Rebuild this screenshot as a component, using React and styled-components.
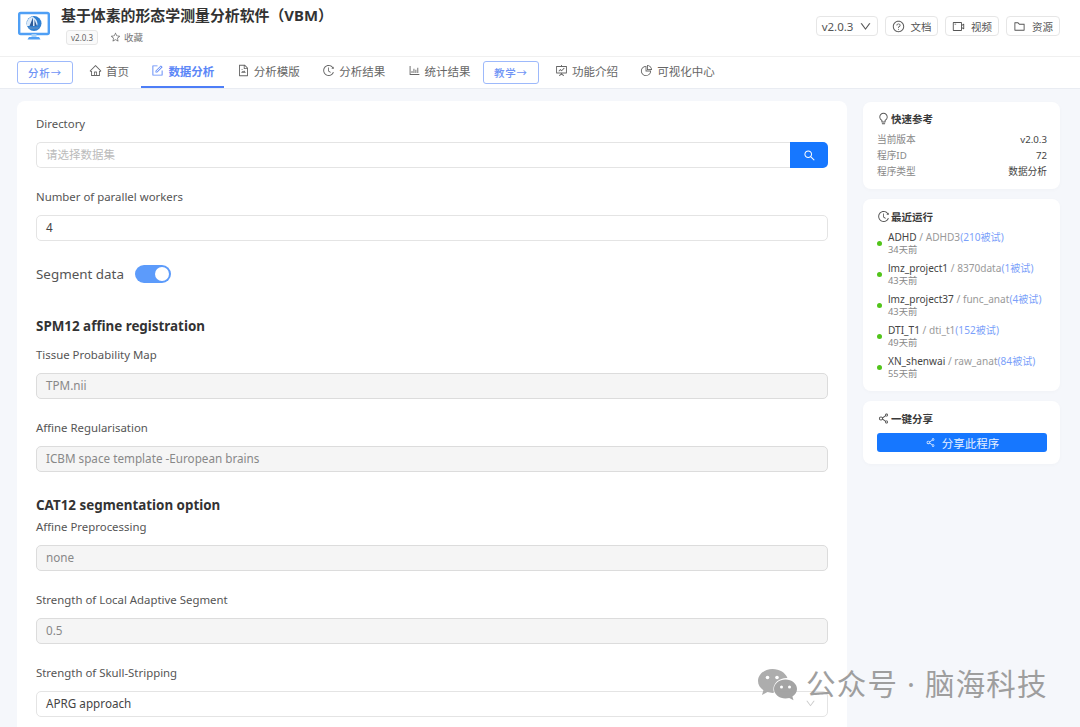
import React from "react";
import styled, { createGlobalStyle } from "styled-components";
import {
  AiOutlineHome, AiOutlineForm, AiOutlineFileImage, AiOutlineHistory, AiOutlineBarChart,
  AiOutlineFundProjectionScreen, AiOutlinePieChart, AiOutlineQuestionCircle, AiOutlineVideoCamera,
  AiOutlineFolder, AiOutlineBulb, AiOutlineShareAlt, AiOutlineSearch, AiOutlineStar, AiOutlineDown,
} from "react-icons/ai";

const Global = createGlobalStyle`
  html, body { margin: 0; padding: 0; height: 727px; overflow: hidden; background: #f5f7fb; }
  * { box-sizing: border-box; }
  body, input, button { font-family: "Noto Sans", "Noto Sans CJK SC", sans-serif; }
`;

const Page = styled.div`position: relative; width: 1080px; height: 727px; overflow: hidden; background: #f5f7fb;`;
const Header = styled.header`display: flex; justify-content: space-between; align-items: center; height: 57px; padding: 0 20px 0 18px; background: #fff; border-bottom: 1px solid #f0f0f0;`;
const Brand = styled.div`display: flex; gap: 11px; align-items: flex-start; height: 44px;`;
const LogoWrap = styled.div`flex: none; width: 32px; height: 32px; margin-top: 3px;`;
const BrandText = styled.div`display: flex; flex-direction: column; gap: 5px;`;
const Title = styled.h1`margin: 0; margin-top: -1px; font-size: 14.9px; line-height: 20px; font-weight: 700; color: #333;`;
const Meta = styled.div`display: flex; align-items: center; gap: 13px; padding-left: 5px;`;
const VersionTag = styled.span`height: 15px; padding: 0 4px; font-size: 8px; line-height: 13px; color: #666; background: #fafafa; border: 1px solid #e6e6e6; border-radius: 3px;`;
const Fav = styled.span`display: flex; align-items: center; gap: 3px; margin-left: -1px; margin-top: -1px; font-size: 9.5px; color: #777; svg { font-size: 11px; }`;
const Actions = styled.div`display: flex; gap: 7px; align-items: center; margin-bottom: 4px;`;
const ActionBtn = styled.div`display: flex; align-items: center; justify-content: center; gap: ${p => p.$gap || 6}px; width: ${p => p.$w}px; height: 20px; border: 1px solid #e6e6e6; border-radius: 4px; font-size: ${p => p.$fs || 10.5}px; color: #555; background: #fff; svg { font-size: ${p => p.$icon || 13}px; }`;

const Nav = styled.nav`display: flex; align-items: stretch; gap: 2.4px; height: 32px; padding-left: 17px; background: #fff; border-bottom: 1px solid #e9ecf2;`;
const GuideBtn = styled.div`align-self: flex-start; display: flex; align-items: center; justify-content: center; margin-top: 4px; margin-right: 3.6px; width: 56px; height: 23px; padding-bottom: 1px; border: 1px solid #9db9fb; border-radius: 3px; font-size: 10.5px; font-weight: 500; letter-spacing: .8px; color: #6f94f5; background: #fff;`;
const Tab = styled.div`display: flex; align-items: center; gap: 4px; padding: 0 10px 2px; height: 31px; font-size: 11.5px; font-weight: ${p => p.$active ? 600 : 400}; color: ${p => p.$active ? "#5b86f7" : "#666"}; border-bottom: 2px solid ${p => p.$active ? "#4d7ef7" : "transparent"}; svg { font-size: 13px; flex: none; }`;

const Main = styled.main`display: flex; align-items: flex-start; gap: 16px; padding: 12px 20px 0 17px;`;
const FormCard = styled.section`flex: none; width: 830px; height: 640px; padding: 15px 19px; background: #fff; border-radius: 8px;`;
const Field = styled.div`margin-bottom: 21px;`;
const Label = styled.div`height: 18px; margin-bottom: 8px; font-size: 11.4px; line-height: 16px; color: #555;`;
const InputBox = styled.div`display: flex; align-items: center; height: 26px; padding: 0 9px 2px; border: 1px solid ${p => p.$disabled ? "#dcdcdc" : "#e4e4e4"}; border-radius: 5px; background: ${p => p.$disabled ? "#f5f5f5" : "#fff"}; font-size: 11.7px; color: ${p => p.$disabled ? "#888" : "#444"};`;
const SearchRow = styled.div`display: flex;`;
const SearchInput = styled(InputBox)`flex: 1; border-right: 0; border-radius: 5px 0 0 5px; color: #bbb; font-size: 11.5px;`;
const SearchBtn = styled.div`display: flex; align-items: center; justify-content: center; width: 38px; height: 26px; background: #1677ff; border-radius: 0 5px 5px 0; color: #fff; font-size: 13px;`;
const SwitchRow = styled.div`display: flex; align-items: center; gap: 11px; height: 18px; margin-top: 24px; font-size: 13.4px; color: #555;`;
const Switch = styled.span`display: flex; justify-content: flex-end; align-items: center; width: 36px; height: 18px; padding: 2px; border-radius: 9px; background: #5c9bfb;`;
const Knob = styled.span`width: 14px; height: 14px; border-radius: 50%; background: #fff;`;
const Heading = styled.h2`margin: ${p => p.$top}px 0 ${p => p.$bottom}px; font-size: 13.4px; line-height: 19px; font-weight: 700; color: #333;`;
const SelectChevron = styled(AiOutlineDown)`margin-left: auto; margin-right: 2px; font-size: 11px; color: #ccc;`;

const Side = styled.aside`display: flex; flex-direction: column; gap: 10px; flex: none; width: 197px; margin-top: 1px;`;
const SideCard = styled.section`padding: ${p => p.$pt}px 13px ${p => p.$pb}px 14px; background: #fff; border-radius: 8px; box-shadow: 0 1px 4px rgba(0, 0, 0, .025);`;
const SideTitle = styled.div`display: flex; align-items: center; gap: 1px; height: 14px; font-size: 10.5px; font-weight: 700; color: #3a3a3a; svg { font-size: 13px; color: #555; }`;
const InfoList = styled.div`margin-top: 7px;`;
const InfoRow = styled.div`display: flex; justify-content: space-between; height: 16px; font-size: 9.7px; line-height: 16px; color: #888;`;
const InfoVal = styled.span`color: #444;`;
const RunList = styled.div`display: flex; flex-direction: column; gap: 6px; margin-top: 8px;`;
const Run = styled.div`display: flex; align-items: center; gap: 6px;`;
const Dot = styled.span`flex: none; width: 5px; height: 5px; border-radius: 50%; background: #52c41a;`;
const RunText = styled.div`display: flex; flex-direction: column; font-size: 10.1px; line-height: 12px; white-space: nowrap;`;
const RunName = styled.span`color: #444;`;
const Muted = styled.span`color: #999;`;
const Sub = styled.span`color: #7b9ffa;`;
const RunDate = styled.span`margin-top: 1px; color: #888; font-size: 9.3px;`;
const ShareBtn = styled.div`display: flex; align-items: center; justify-content: center; gap: 6px; margin-top: 8px; height: 19px; background: #1677ff; border-radius: 3px; color: #e6f0ff; font-size: 11.5px; svg { font-size: 11px; }`;

const Watermark = styled.div`position: absolute; left: 757px; top: 665px; display: flex; align-items: center; gap: 8px; color: #9a9a9a; font-size: 29.5px; line-height: 38px; letter-spacing: 1.2px; white-space: nowrap; opacity: .95;`;

const Logo = () => (
  <svg width="32" height="32" viewBox="0 0 32 32" aria-hidden="true">
    <rect x="1.200" y="4" width="29.600" height="21" rx="1.500" fill="#fff" stroke="#4f9ff5" strokeWidth="2.400" />
    <rect x="13.500" y="25" width="5" height="3" fill="#a8d2f8" />
    <path d="M11 28h10l1.500 2.500H9.500z" fill="#4f9ff5" />
    <circle cx="16" cy="14.500" r="7.500" fill="#2f7fd0" />
    <path d="M14.500 7.500a7.500 7.500 0 0 0-5.500 9.500h10q2-5-4.500-9.500z" fill="#dcebfa" />
    <path d="M15 8.500 11.500 17H15zM16.500 10.500 19 17h-2.500z" fill="#2c5c9a" />
    <path d="M10 18.200h11l-1.500 1.500h-8z" fill="#5a8cc4" />
  </svg>
);

const Wechat = () => (
  <svg width="41" height="33" viewBox="0 0 41 33" aria-hidden="true">
    <path d="M15.500 1C7.500 1 1 6.300 1 13c0 3.800 2.100 7 5.400 9.200L5 27l5.500-2.900c1.600.5 3.300.8 5 .8.6 0 1 0 1.500-.1a11 11 0 0 1-.6-3.500c0-6.300 5.800-11.300 13-11.300h1C28.500 4.800 22.600 1 15.500 1z" fill="#a9a9a9" />
    <path d="M40 21c0-5.300-5.200-9.500-11.500-9.500S17 15.700 17 21s5.200 9.500 11.500 9.500c1.300 0 2.600-.2 3.800-.5l4.200 2.300-1.100-3.800c2.800-1.800 4.600-4.500 4.600-7.500z" fill="#a0a0a0" />
    <circle cx="10.500" cy="9.500" r="1.800" fill="#fff" /><circle cx="20" cy="9.500" r="1.800" fill="#fff" />
    <circle cx="24.500" cy="19" r="1.500" fill="#fff" /><circle cx="32.500" cy="19" r="1.500" fill="#fff" />
  </svg>
);

const tabsA = [
  [AiOutlineHome, "首页"], [AiOutlineForm, "数据分析", true], [AiOutlineFileImage, "分析模版"],
  [AiOutlineHistory, "分析结果"], [AiOutlineBarChart, "统计结果"],
];
const tabsB = [[AiOutlineFundProjectionScreen, "功能介绍"], [AiOutlinePieChart, "可视化中心"]];
const runs = [
  ["ADHD", "ADHD3", "(210被试)", "34天前"],
  ["lmz_project1", "8370data", "(1被试)", "43天前"],
  ["lmz_project37", "func_anat", "(4被试)", "43天前"],
  ["DTI_T1", "dti_t1", "(152被试)", "49天前"],
  ["XN_shenwai", "raw_anat", "(84被试)", "55天前"],
];
const TabItem = ({ icon: Icon, text, active }) => <Tab $active={active}><Icon />{text}</Tab>;
const ReadOnly = ({ label, value }) => (
  <Field><Label>{label}</Label><InputBox $disabled>{value}</InputBox></Field>
);

export default function App() {
  return (
    <Page>
      <Global />
      <Header>
        <Brand>
          <LogoWrap><Logo /></LogoWrap>
          <BrandText>
            <Title>基于体素的形态学测量分析软件（VBM）</Title>
            <Meta><VersionTag>v2.0.3</VersionTag><Fav><AiOutlineStar />收藏</Fav></Meta>
          </BrandText>
        </Brand>
        <Actions>
          <ActionBtn $w={62} $fs={11.5} $icon={13}>v2.0.3 <AiOutlineDown /></ActionBtn>
          <ActionBtn $w={53}><AiOutlineQuestionCircle />文档</ActionBtn>
          <ActionBtn $w={54}><AiOutlineVideoCamera />视频</ActionBtn>
          <ActionBtn $w={54}><AiOutlineFolder />资源</ActionBtn>
        </Actions>
      </Header>
      <Nav>
        <GuideBtn>分析→</GuideBtn>
        {tabsA.map(([I, t, a]) => <TabItem key={t} icon={I} text={t} active={a} />)}
        <GuideBtn>教学→</GuideBtn>
        {tabsB.map(([I, t]) => <TabItem key={t} icon={I} text={t} />)}
      </Nav>
      <Main>
        <FormCard>
          <Field>
            <Label>Directory</Label>
            <SearchRow>
              <SearchInput>请选择数据集</SearchInput>
              <SearchBtn><AiOutlineSearch /></SearchBtn>
            </SearchRow>
          </Field>
          <Field>
            <Label>Number of parallel workers</Label>
            <InputBox>4</InputBox>
          </Field>
          <SwitchRow>Segment data<Switch><Knob /></Switch></SwitchRow>
          <Heading $top={34} $bottom={11}>SPM12 affine registration</Heading>
          <ReadOnly label="Tissue Probability Map" value="TPM.nii" />
          <ReadOnly label="Affine Regularisation" value="ICBM space template -European brains" />
          <Heading $top={24} $bottom={4}>CAT12 segmentation option</Heading>
          <ReadOnly label="Affine Preprocessing" value="none" />
          <ReadOnly label="Strength of Local Adaptive Segment" value="0.5" />
          <Field>
            <Label>Strength of Skull-Stripping</Label>
            <InputBox>APRG approach<SelectChevron /></InputBox>
          </Field>
        </FormCard>
        <Side>
          <SideCard $pt={9} $pb={9}>
            <SideTitle><AiOutlineBulb />快速参考</SideTitle>
            <InfoList>
              <InfoRow>当前版本<InfoVal>v2.0.3</InfoVal></InfoRow>
              <InfoRow>程序ID<InfoVal>72</InfoVal></InfoRow>
              <InfoRow>程序类型<InfoVal>数据分析</InfoVal></InfoRow>
            </InfoList>
          </SideCard>
          <SideCard $pt={10} $pb={11}>
            <SideTitle><AiOutlineHistory />最近运行</SideTitle>
            <RunList>
              {runs.map(([n, d, s, t]) => (
                <Run key={n}>
                  <Dot />
                  <RunText>
                    <span><RunName>{n}</RunName><Muted> / {d}</Muted><Sub>{s}</Sub></span>
                    <RunDate>{t}</RunDate>
                  </RunText>
                </Run>
              ))}
            </RunList>
          </SideCard>
          <SideCard $pt={10} $pb={12}>
            <SideTitle><AiOutlineShareAlt />一键分享</SideTitle>
            <ShareBtn><AiOutlineShareAlt />分享此程序</ShareBtn>
          </SideCard>
        </Side>
      </Main>
      <Watermark><Wechat />公众号 · 脑海科技</Watermark>
    </Page>
  );
}
